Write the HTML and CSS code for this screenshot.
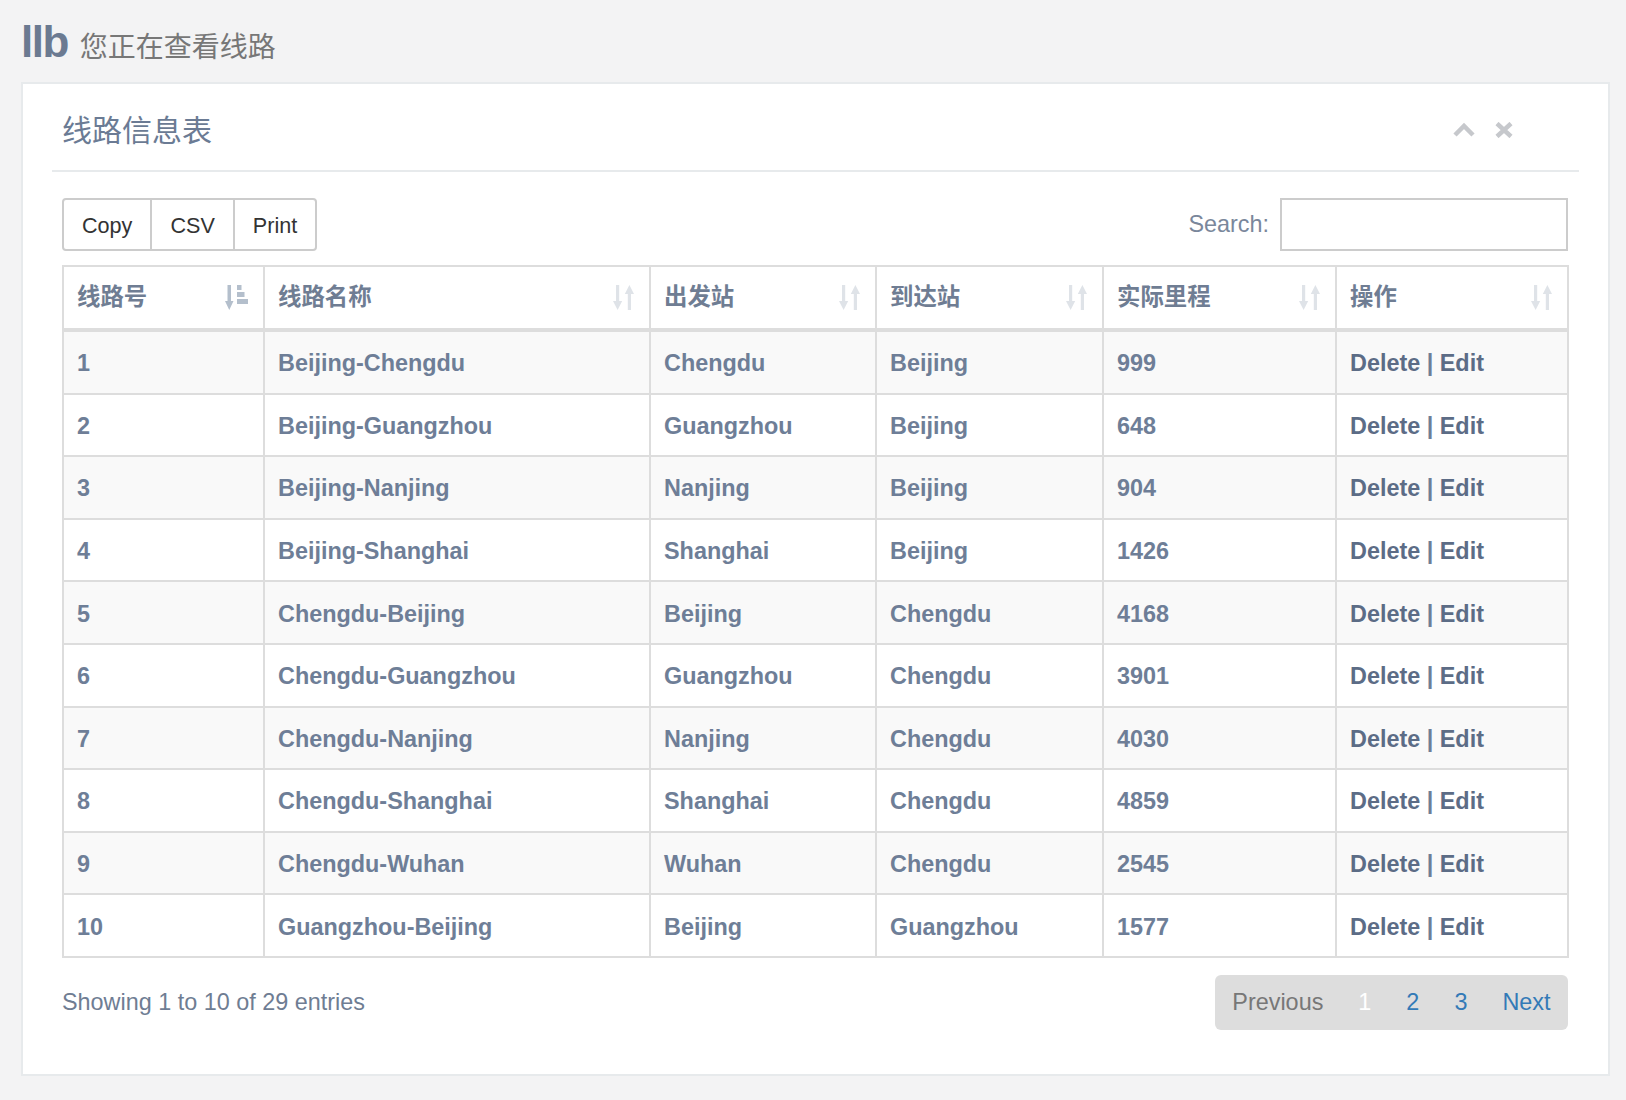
FILE: index.html
```html
<!DOCTYPE html>
<html lang="zh-CN">
<head>
<meta charset="utf-8">
<title>线路信息表</title>
<link rel="stylesheet" href="styles.css">
</head>
<body>
<div class="page-head">
  <span class="logo">llb</span>
  <span class="crumb">您正在查看线路</span>
</div>
<div class="panel">
  <div class="panel-heading">
    <h5 class="panel-title">线路信息表</h5>
    <div class="panel-tools">
      <svg class="tool" width="22" height="15" viewBox="0 0 22 15"><polyline points="2,13 11,4 20,13" fill="none" stroke="#c6c8cc" stroke-width="4.5" stroke-linejoin="miter"/></svg>
      <svg class="tool" width="18" height="16" viewBox="0 0 18 16"><path d="M2 1.5 L16 14.5 M16 1.5 L2 14.5" fill="none" stroke="#c6c8cc" stroke-width="4.5"/></svg>
    </div>
  </div>
  <div class="panel-body">
    <div class="toolbar">
      <div class="btn-group">
        <button class="btn">Copy</button>
        <button class="btn">CSV</button>
        <button class="btn">Print</button>
      </div>
      <label class="search">Search:<input type="text" class="search-input"></label>
    </div>
    <table class="grid">
      <thead>
        <tr>
          <th><div class="th-in"><span>线路号</span><svg class="sort sort-on" width="23" height="25" viewBox="0 0 23 25"><path d="M2.5 0h3.5v16h2.5l-4.25 9-4.25-9h2.5z"/><rect x="12" y="0" width="4.5" height="5"/><rect x="12" y="7" width="7.5" height="5"/><rect x="12" y="14" width="11" height="5"/></svg></div></th>
          <th><div class="th-in"><span>线路名称</span><svg class="sort" width="21" height="25" viewBox="0 0 21 25"><path d="M3 0h3.2v16h3l-4.6 9-4.6-9h3z"/><path d="M14.8 25h3.2v-16h3l-4.6-9-4.6 9h3z"/></svg></div></th>
          <th><div class="th-in"><span>出发站</span><svg class="sort" width="21" height="25" viewBox="0 0 21 25"><path d="M3 0h3.2v16h3l-4.6 9-4.6-9h3z"/><path d="M14.8 25h3.2v-16h3l-4.6-9-4.6 9h3z"/></svg></div></th>
          <th><div class="th-in"><span>到达站</span><svg class="sort" width="21" height="25" viewBox="0 0 21 25"><path d="M3 0h3.2v16h3l-4.6 9-4.6-9h3z"/><path d="M14.8 25h3.2v-16h3l-4.6-9-4.6 9h3z"/></svg></div></th>
          <th><div class="th-in"><span>实际里程</span><svg class="sort" width="21" height="25" viewBox="0 0 21 25"><path d="M3 0h3.2v16h3l-4.6 9-4.6-9h3z"/><path d="M14.8 25h3.2v-16h3l-4.6-9-4.6 9h3z"/></svg></div></th>
          <th><div class="th-in"><span>操作</span><svg class="sort" width="21" height="25" viewBox="0 0 21 25"><path d="M3 0h3.2v16h3l-4.6 9-4.6-9h3z"/><path d="M14.8 25h3.2v-16h3l-4.6-9-4.6 9h3z"/></svg></div></th>
        </tr>
      </thead>
      <tbody>
        <tr><td>1</td><td>Beijing-Chengdu</td><td>Chengdu</td><td>Beijing</td><td>999</td><td><a class="act">Delete</a> | <a class="act">Edit</a></td></tr>
        <tr><td>2</td><td>Beijing-Guangzhou</td><td>Guangzhou</td><td>Beijing</td><td>648</td><td><a class="act">Delete</a> | <a class="act">Edit</a></td></tr>
        <tr><td>3</td><td>Beijing-Nanjing</td><td>Nanjing</td><td>Beijing</td><td>904</td><td><a class="act">Delete</a> | <a class="act">Edit</a></td></tr>
        <tr><td>4</td><td>Beijing-Shanghai</td><td>Shanghai</td><td>Beijing</td><td>1426</td><td><a class="act">Delete</a> | <a class="act">Edit</a></td></tr>
        <tr><td>5</td><td>Chengdu-Beijing</td><td>Beijing</td><td>Chengdu</td><td>4168</td><td><a class="act">Delete</a> | <a class="act">Edit</a></td></tr>
        <tr><td>6</td><td>Chengdu-Guangzhou</td><td>Guangzhou</td><td>Chengdu</td><td>3901</td><td><a class="act">Delete</a> | <a class="act">Edit</a></td></tr>
        <tr><td>7</td><td>Chengdu-Nanjing</td><td>Nanjing</td><td>Chengdu</td><td>4030</td><td><a class="act">Delete</a> | <a class="act">Edit</a></td></tr>
        <tr><td>8</td><td>Chengdu-Shanghai</td><td>Shanghai</td><td>Chengdu</td><td>4859</td><td><a class="act">Delete</a> | <a class="act">Edit</a></td></tr>
        <tr><td>9</td><td>Chengdu-Wuhan</td><td>Wuhan</td><td>Chengdu</td><td>2545</td><td><a class="act">Delete</a> | <a class="act">Edit</a></td></tr>
        <tr><td>10</td><td>Guangzhou-Beijing</td><td>Beijing</td><td>Guangzhou</td><td>1577</td><td><a class="act">Delete</a> | <a class="act">Edit</a></td></tr>
      </tbody>
    </table>
    <div class="footer">
      <div class="info">Showing 1 to 10 of 29 entries</div>
      <ul class="pager">
        <li><a class="pg disabled">Previous</a></li>
        <li><a class="pg active">1</a></li>
        <li><a class="pg">2</a></li>
        <li><a class="pg">3</a></li>
        <li><a class="pg">Next</a></li>
      </ul>
    </div>
  </div>
</div>
</body>
</html>
```
FILE: styles.css
```css
html, body {
  margin: 0;
  padding: 0;
}
body {
  background: #f3f3f4;
  font-family: "Liberation Sans", "Noto Sans CJK SC", sans-serif;
  color: #6c7a91;
}

.page-head {
  height: 82px;
  box-sizing: border-box;
  padding: 20px 0 0 21px;
  display: flex;
  align-items: baseline;
}
.logo {
  font-size: 44px;
  line-height: 44px;
  font-weight: 700;
  color: #6b7a91;
  letter-spacing: -1.5px;
}
.crumb {
  font-family: "Noto Sans CJK SC", sans-serif;
  font-size: 28px;
  color: #777;
  margin-left: 12px;
}

.panel {
  margin: 0 16px 0 21px;
  background: #fff;
  border: 2px solid #e7eaec;
  padding: 0 29px 44px;
}
.panel-heading {
  height: 86px;
  border-bottom: 2px solid #e7eaec;
  display: flex;
  align-items: center;
  justify-content: space-between;
  padding: 0 10px;
}
.panel-title {
  margin: 0;
  padding-top: 2px;
  font-family: "Noto Sans CJK SC", sans-serif;
  font-size: 30px;
  font-weight: 400;
  color: #6b7b94;
}
.panel-tools {
  display: flex;
  align-items: center;
  gap: 20px;
  margin-right: 56px;
  padding-top: 5px;
}
.tool {
  display: block;
}

.panel-body {
  padding: 0 10px;
}
.toolbar {
  display: flex;
  justify-content: space-between;
  align-items: center;
  margin-top: 26px;
}
.btn-group {
  display: flex;
}
.btn {
  font-family: "Liberation Sans", sans-serif;
  font-size: 21.6px;
  color: #333;
  background: #fff;
  border: 2px solid #ccc;
  height: 53px;
  padding: 3px 18px 0;
  margin: 0 0 0 -2px;
  border-radius: 0;
}
.btn:first-child {
  margin-left: 0;
  border-radius: 4px 0 0 4px;
}
.btn:last-child {
  border-radius: 0 4px 4px 0;
}
.search {
  display: flex;
  align-items: center;
  font-size: 23.4px;
  color: #7a879b;
}
.search-input {
  width: 288px;
  height: 53px;
  box-sizing: border-box;
  margin: 0 1px 0 11px;
  border: 2px solid #ccc;
  border-radius: 0;
  background: #fff;
}

.grid {
  width: 100%;
  margin-top: 14px;
  border-collapse: separate;
  border-spacing: 0;
  table-layout: fixed;
  border-top: 2px solid #ddd;
  border-left: 2px solid #ddd;
  font-size: 23.4px;
}
.grid th,
.grid td {
  box-sizing: border-box;
  border-right: 2px solid #ddd;
  border-bottom: 2px solid #ddd;
  text-align: left;
  line-height: 24px;
  white-space: nowrap;
}
.grid th {
  padding: 15.5px 15px 20.5px 13px;
  border-bottom-width: 4px;
  font-family: "Noto Sans CJK SC", sans-serif;
  font-weight: 700;
  color: #6f7d93;
}
.grid th:nth-child(1) { width: 201px; }
.grid th:nth-child(2) { width: 386px; }
.grid th:nth-child(3) { width: 226px; }
.grid th:nth-child(4) { width: 227px; }
.grid th:nth-child(5) { width: 233px; }
.th-in {
  display: flex;
  justify-content: space-between;
  align-items: center;
}
.sort {
  display: block;
  fill: #dfe3e8;
  position: relative;
  top: 2px;
}
.sort-on {
  fill: #b4bfcc;
}
.grid td {
  padding: 19.3px 13px 17.3px;
  font-weight: 700;
  color: #6e7e97;
}
.grid tbody tr:nth-child(odd) td {
  background: #f9f9f9;
}
.act {
  color: #5c6c86;
}

.footer {
  display: flex;
  justify-content: space-between;
  align-items: center;
  margin-top: 17px;
}
.info {
  font-size: 23.4px;
  color: #6f7d93;
}
.pager {
  list-style: none;
  margin: 0 1px 0 0;
  padding: 0;
  display: flex;
  background: #ddd;
  border-radius: 6px;
}
.pg {
  display: block;
  padding: 15.5px 17.5px;
  line-height: 24px;
  font-size: 23.4px;
  color: #337ab7;
}
.pg.disabled {
  color: #777;
}
.pg.active {
  color: #fff;
}
```
